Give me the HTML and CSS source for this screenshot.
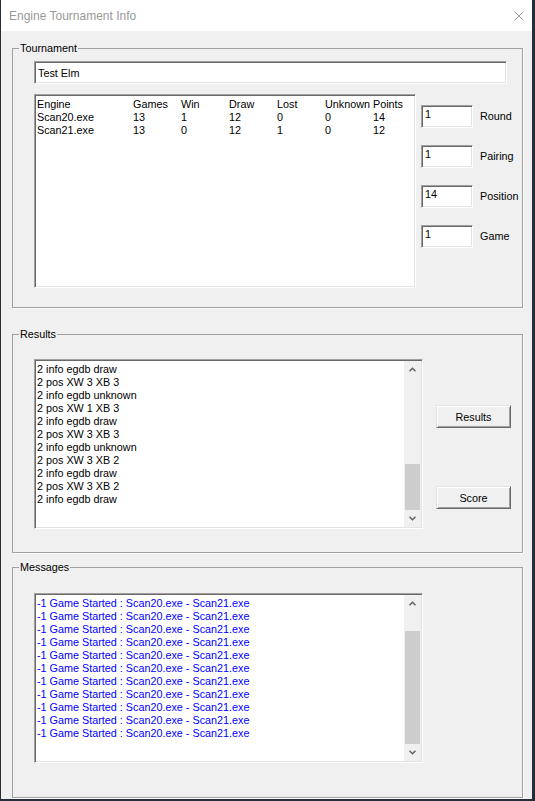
FILE: index.html
```html
<!DOCTYPE html>
<html>
<head>
<meta charset="utf-8">
<title>Engine Tournament Info</title>
<link rel="stylesheet" href="styles.css">
</head>
<body>
<div class="window">
  <div class="titlebar">
    <span class="title">Engine Tournament Info</span>
    <svg class="close" viewBox="0 0 10 10" width="10" height="10"><path d="M0.5 0.5 L9.5 9.5 M9.5 0.5 L0.5 9.5" stroke="#9a9a9a" stroke-width="1" fill="none"/></svg>
  </div>
  <div class="client">
    <fieldset class="group group-tournament">
      <legend>Tournament</legend>
      <div class="edit edit-name">Test Elm</div>
      <div class="tour-row">
        <div class="listbox engines">
          <div class="erow"><span>Engine</span><span>Games</span><span>Win</span><span>Draw</span><span>Lost</span><span>Unknown</span><span>Points</span></div>
          <div class="erow"><span>Scan20.exe</span><span>13</span><span>1</span><span>12</span><span>0</span><span>0</span><span>14</span></div>
          <div class="erow"><span>Scan21.exe</span><span>13</span><span>0</span><span>12</span><span>1</span><span>0</span><span>12</span></div>
        </div>
        <div class="fields">
          <div class="field"><div class="edit small">1</div><span class="flabel">Round</span></div>
          <div class="field"><div class="edit small">1</div><span class="flabel">Pairing</span></div>
          <div class="field"><div class="edit small">14</div><span class="flabel">Position</span></div>
          <div class="field"><div class="edit small">1</div><span class="flabel">Game</span></div>
        </div>
      </div>
    </fieldset>

    <fieldset class="group group-results">
      <legend>Results</legend>
      <div class="res-row">
        <div class="listbox log">
          <div class="lines">
            <div>2 info egdb draw</div>
            <div>2 pos XW 3 XB 3</div>
            <div>2 info egdb unknown</div>
            <div>2 pos XW 1 XB 3</div>
            <div>2 info egdb draw</div>
            <div>2 pos XW 3 XB 3</div>
            <div>2 info egdb unknown</div>
            <div>2 pos XW 3 XB 2</div>
            <div>2 info egdb draw</div>
            <div>2 pos XW 3 XB 2</div>
            <div>2 info egdb draw</div>
          </div>
          <div class="vscroll">
            <div class="sb-btn"><svg width="7" height="5" viewBox="0 0 7 5"><path d="M0.5 4.3 L3.5 1.2 L6.5 4.3" stroke="#606060" stroke-width="1.4" fill="none"/></svg></div>
            <div class="track"><div class="thumb" style="margin-top:86px;height:46px"></div></div>
            <div class="sb-btn"><svg width="7" height="5" viewBox="0 0 7 5"><path d="M0.5 0.7 L3.5 3.8 L6.5 0.7" stroke="#606060" stroke-width="1.4" fill="none"/></svg></div>
          </div>
        </div>
        <div class="buttons">
          <button class="btn">Results</button>
          <button class="btn">Score</button>
        </div>
      </div>
    </fieldset>

    <fieldset class="group group-messages">
      <legend>Messages</legend>
      <div class="msg-row">
        <div class="listbox log">
          <div class="lines blue">
            <div>-1 Game Started : Scan20.exe - Scan21.exe</div>
            <div>-1 Game Started : Scan20.exe - Scan21.exe</div>
            <div>-1 Game Started : Scan20.exe - Scan21.exe</div>
            <div>-1 Game Started : Scan20.exe - Scan21.exe</div>
            <div>-1 Game Started : Scan20.exe - Scan21.exe</div>
            <div>-1 Game Started : Scan20.exe - Scan21.exe</div>
            <div>-1 Game Started : Scan20.exe - Scan21.exe</div>
            <div>-1 Game Started : Scan20.exe - Scan21.exe</div>
            <div>-1 Game Started : Scan20.exe - Scan21.exe</div>
            <div>-1 Game Started : Scan20.exe - Scan21.exe</div>
            <div>-1 Game Started : Scan20.exe - Scan21.exe</div>
          </div>
          <div class="vscroll">
            <div class="sb-btn"><svg width="7" height="5" viewBox="0 0 7 5"><path d="M0.5 4.3 L3.5 1.2 L6.5 4.3" stroke="#606060" stroke-width="1.4" fill="none"/></svg></div>
            <div class="track"><div class="thumb" style="margin-top:19px;height:113px"></div></div>
            <div class="sb-btn"><svg width="7" height="5" viewBox="0 0 7 5"><path d="M0.5 0.7 L3.5 3.8 L6.5 0.7" stroke="#606060" stroke-width="1.4" fill="none"/></svg></div>
          </div>
        </div>
      </div>
    </fieldset>
  </div>
</div>
</body>
</html>
```

FILE: styles.css
```css
* { box-sizing: border-box; }
html, body { margin: 0; padding: 0; }
body {
  background: #262c38;
  width: 535px;
  height: 801px;
  overflow: hidden;
  font-family: "Liberation Sans", Arial, sans-serif;
  font-size: 10.8px;
  color: #000;
}
.window {
  margin-left: 1px;
  width: 531px;
  height: 799px;
  background: #f0f0f0;
  display: flex;
  flex-direction: column;
}
.titlebar {
  height: 31px;
  flex-shrink: 0;
  background: #fff;
  display: flex;
  align-items: center;
  justify-content: space-between;
  padding: 0 8px;
}
.title { font-size: 12px; color: #999; }
.close { display: block; }

.client {
  display: flex;
  flex-direction: column;
  padding: 11px 0 0 11px;
}
.group {
  margin: 0;
  padding: 0;
  border: 1px solid #a0a0a0;
  box-shadow: 1px 1px 0 #fff;
  width: 511px;
  min-width: 0;
}
.group legend {
  margin-left: 6px;
  padding: 0 1px;
  line-height: 13px;
  font-size: 10.8px;
}
.group-tournament { height: 266px; }
.group-results { height: 225px; margin-top: 20px; }
.group-messages { height: 237px; margin-top: 8px; }

.edit {
  background: #fff;
  border: 1px solid;
  border-color: #a0a0a0 #fff #fff #a0a0a0;
  box-shadow: inset 1px 1px 0 #696969, inset -1px -1px 0 #e3e3e3;
}
.edit-name {
  width: 473px;
  height: 23px;
  margin: 6px 0 0 21px;
  padding: 0 0 0 3px;
  display: flex;
  align-items: center;
}

.tour-row {
  display: flex;
  gap: 5px;
  margin: 10px 0 0 21px;
}
.listbox {
  background: #fff;
  border: 1px solid;
  border-color: #a0a0a0 #fff #fff #a0a0a0;
  box-shadow: inset 1px 1px 0 #696969, inset -1px -1px 0 #e3e3e3;
}
.engines {
  width: 382px;
  height: 194px;
  padding: 3px 0 0 2px;
}
.erow {
  display: grid;
  grid-template-columns: 96px repeat(6, 48px);
  line-height: 13px;
  white-space: nowrap;
}

.fields {
  display: flex;
  flex-direction: column;
  gap: 17px;
  padding-top: 11px;
}
.field {
  display: flex;
  align-items: center;
  gap: 7px;
}
.edit.small {
  width: 52px;
  height: 23px;
  padding: 2px 0 0 3px;
  line-height: 13px;
}
.flabel { line-height: 13px; }

.res-row {
  display: flex;
  margin: 18px 0 0 21px;
}
.msg-row {
  display: flex;
  margin: 19px 0 0 21px;
}
.log {
  width: 389px;
  height: 170px;
  padding: 1px;
  display: flex;
}
.lines {
  flex: 1;
  padding: 2px 0 0 1px;
  line-height: 13px;
  white-space: nowrap;
  overflow: hidden;
}
.lines.blue { color: #0000ff; }

.vscroll {
  width: 17px;
  flex-shrink: 0;
  background: #f0f0f0;
  display: flex;
  flex-direction: column;
}
.sb-btn {
  height: 17px;
  flex-shrink: 0;
  display: flex;
  align-items: center;
  justify-content: center;
}
.sb-btn svg { display: block; }
.track { flex: 1; }
.thumb {
  background: #cdcdcd;
  margin-left: 1px;
  margin-right: 1px;
}

.buttons {
  display: flex;
  flex-direction: column;
  gap: 58px;
  margin-left: 13px;
  padding-top: 46px;
}
.btn {
  width: 75px;
  height: 23px;
  padding: 0;
  font-family: "Liberation Sans", Arial, sans-serif;
  font-size: 10.8px;
  color: #000;
  background: #f0f0f0;
  border: 1px solid;
  border-color: #e3e3e3 #696969 #696969 #e3e3e3;
  box-shadow: inset 1px 1px 0 #fff, inset -1px -1px 0 #a0a0a0;
}
```
